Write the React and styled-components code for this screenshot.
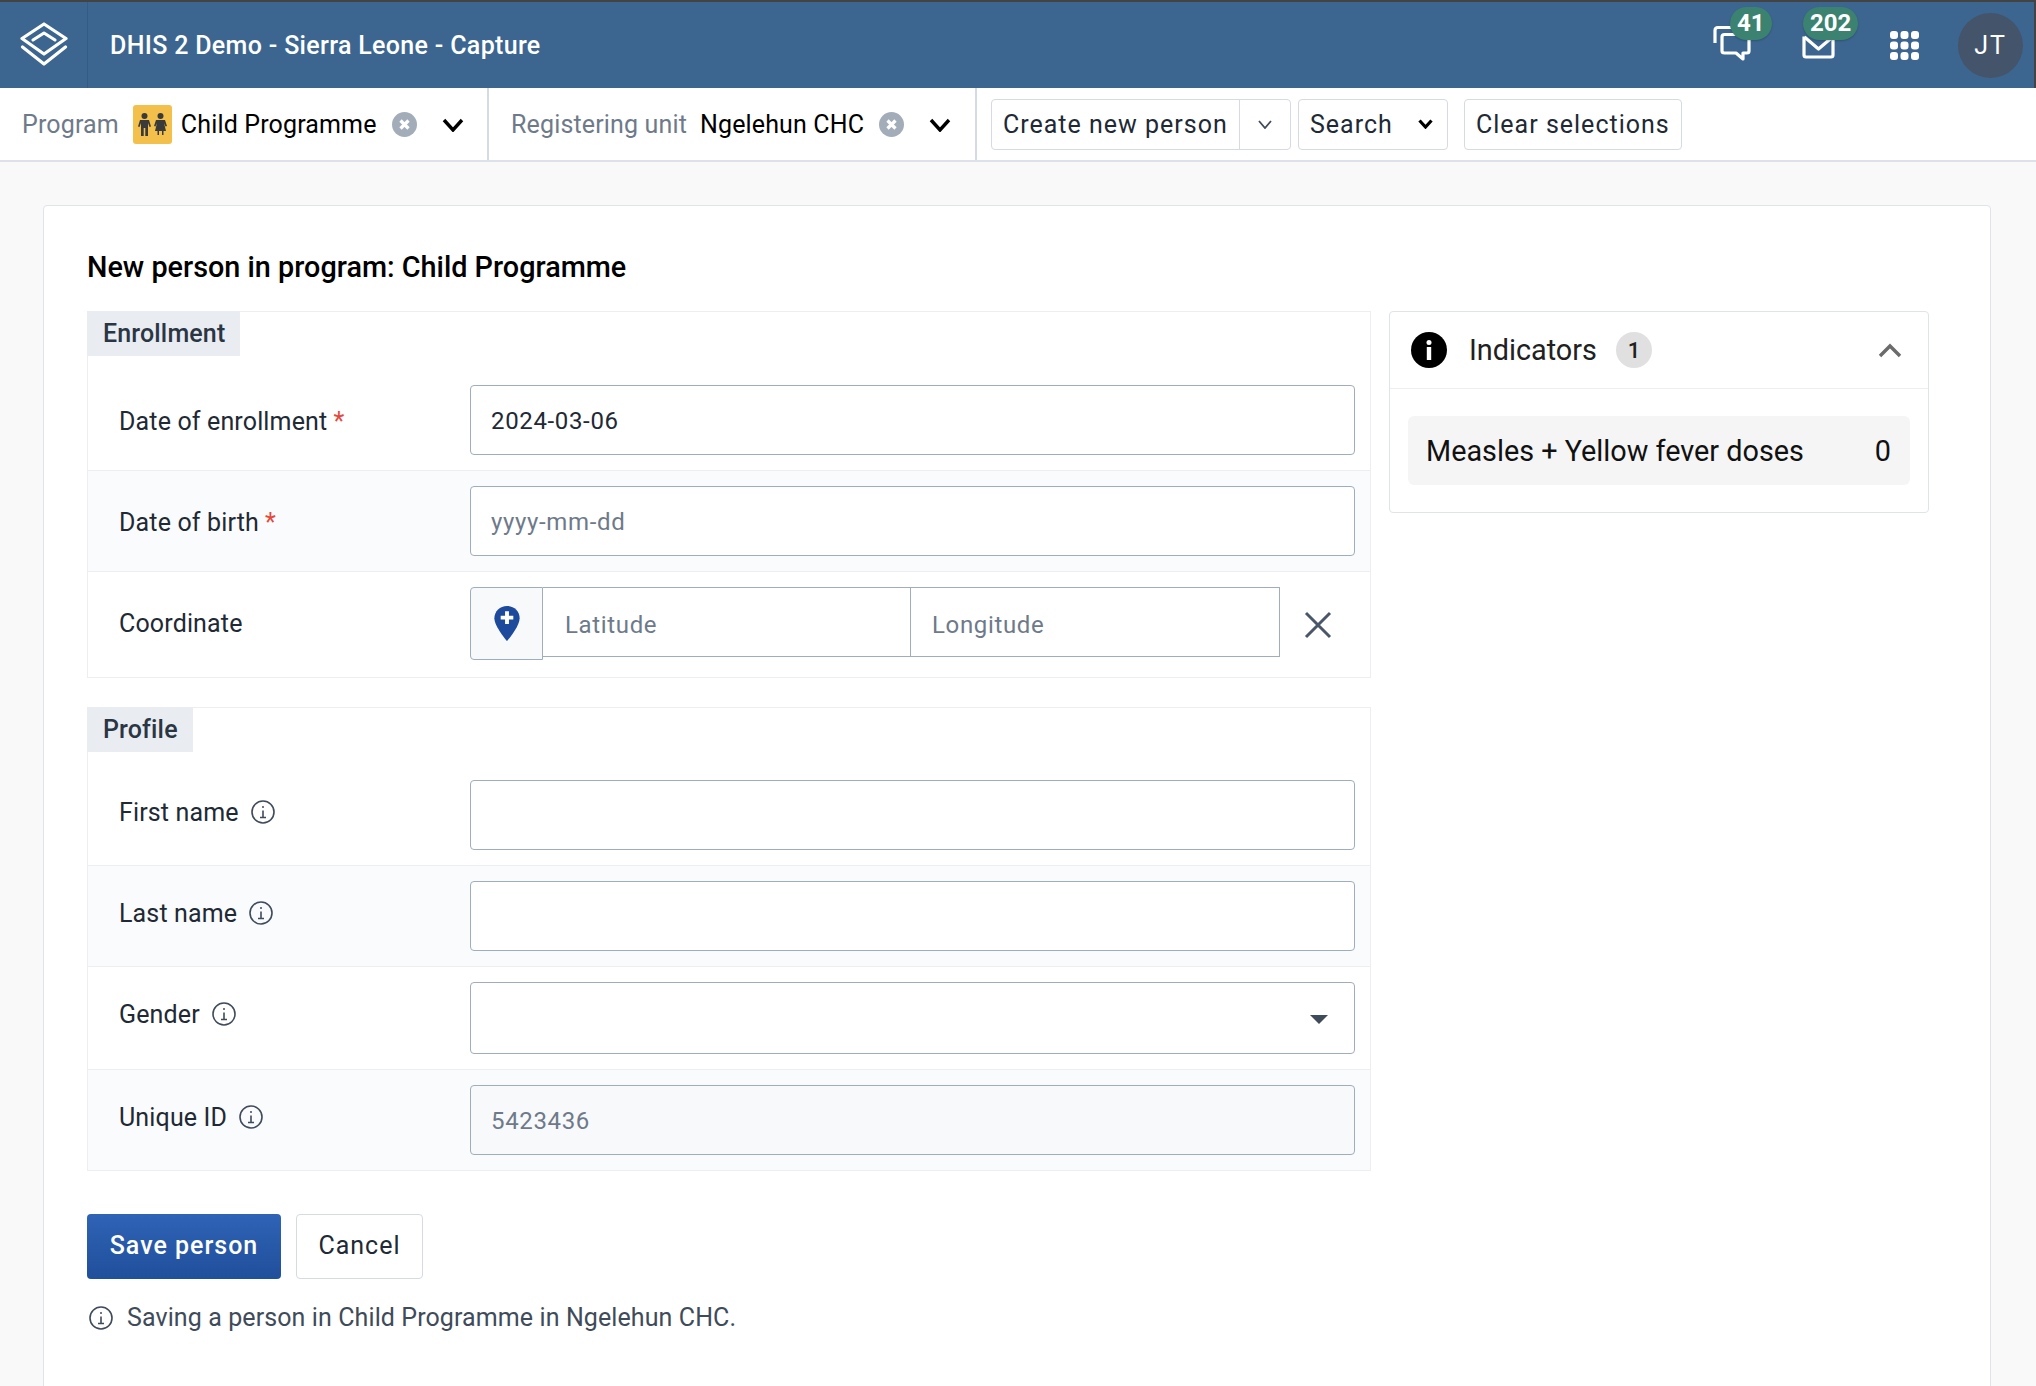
import React from 'react'
import styled, { createGlobalStyle } from 'styled-components'

const Global = createGlobalStyle`
  html, body { margin: 0; padding: 0; background: #f9f9fa; }
  body { font-family: Roboto, "Noto Sans", sans-serif; color: #212934; }
  * { box-sizing: border-box; }
`

const Screen = styled.div`
  width: 2036px;
  height: 1386px;
  overflow: hidden;
  background: #f9f9fa;
`

const Header = styled.header`
  height: 88px;
  display: flex;
  align-items: stretch;
  background: #3c668f;
  border-top: 2px solid #434343;
  border-right: 2px solid #434343;
  color: #fff;
`
const LogoCell = styled.div`
  width: 88px;
  display: flex;
  align-items: center;
  justify-content: center;
  border-right: 1px solid #345b82;
  padding-bottom: 2px;
`
const AppTitle = styled.div`
  margin-left: 22px;
  align-self: center;
  font-size: 25px;
  font-weight: 500;
  letter-spacing: 0.33px;
`
const HeaderRight = styled.div`
  margin-left: auto;
  display: flex;
  align-items: center;
  padding-right: 11px;
`
const NotifCell = styled.div`
  position: relative;
  width: ${p => p.$width}px;
  height: 40px;
  display: flex;
  align-items: flex-start;
`
const IconOffset = styled.span`
  display: block;
  margin-top: ${p => p.$top}px;
`
const Badge = styled.span`
  position: absolute;
  top: ${p => p.$top}px;
  left: ${p => p.$left}px;
  height: 33px;
  padding: 0 7px;
  min-width: 41px;
  border-radius: 17px;
  background: #3b8271;
  box-shadow: 0 1px 2px rgba(0, 0, 0, 0.2);
  color: #fff;
  font-size: 24px;
  font-weight: 700;
  line-height: 33px;
  text-align: center;
`
const Avatar = styled.div`
  width: 65px;
  height: 65px;
  border-radius: 50%;
  background: #44546b;
  color: #fff;
  font-size: 25px;
  letter-spacing: 2px;
  display: flex;
  align-items: center;
  justify-content: center;
`

const Toolbar = styled.div`
  height: 74px;
  display: flex;
  background: #fff;
  border-bottom: 2px solid #dde1ea;
`
const Selector = styled.div`
  width: ${p => p.$width}px;
  display: flex;
  align-items: center;
  padding-left: ${p => p.$pad}px;
  border-right: 2px solid #d5dae3;
  font-size: 25px;
  letter-spacing: 0.15px;
`
const SelectorLabel = styled.span`
  color: #6e7a8a;
  margin-right: ${p => p.$gap}px;
`
const SelectorValue = styled.span`
  color: #000;
  margin-left: ${p => p.$left || 0}px;
`
const ProgramIcon = styled.span`
  width: 39px;
  height: 39px;
  border-radius: 3px;
  background: #f3c14b;
  display: flex;
  align-items: center;
  justify-content: center;
`
const ClearDot = styled.svg`
  width: 25px;
  height: 25px;
  margin-left: 15px;
`
const SelectorArrow = styled.svg`
  width: 22px;
  height: 14px;
  margin-left: 25px;
  margin-top: 2px;
`
const ToolbarActions = styled.div`
  display: flex;
  align-items: center;
  padding-left: 14px;
`
const ToolButton = styled.div`
  height: 51px;
  display: flex;
  align-items: center;
  background: #fff;
  border: 1px solid #d5dae3;
  border-radius: 4px;
  color: #212934;
  font-size: 25px;
  letter-spacing: 1px;
  margin-left: ${p => p.$left || 0}px;
  padding: ${p => p.$padding || '0 11px'};
  width: ${p => (p.$width ? p.$width + 'px' : 'auto')};
`
const SplitPart = styled.span`
  width: 51px;
  margin-left: auto;
  align-self: stretch;
  display: flex;
  align-items: center;
  justify-content: center;
  border-left: 1px solid #d5dae3;
`

const Page = styled.main`
  padding: 43px 45px 0 43px;
`
const Card = styled.div`
  height: 1300px;
  background: #fff;
  border: 1px solid #dfe3ea;
  border-radius: 4px;
  padding: 44px 60px 0 43px;
`
const Heading = styled.h1`
  margin: 0;
  height: 61px;
  font-size: 28.8px;
  line-height: 34px;
  font-weight: 500;
  color: #000;
`
const Columns = styled.div`
  display: flex;
  align-items: flex-start;
  gap: 18px;
`
const FormColumn = styled.div`
  width: 1284px;
`

const Section = styled.section`
  border: 1px solid #eceef2;
  margin-bottom: ${p => p.$bottom || 0}px;
`
const SectionTab = styled.div`
  display: table;
  height: 45px;
  margin: -1px 0 0 -1px;
  padding: 0 15px 0 16px;
  background: #e9ecf1;
  color: #2b3644;
  font-size: 25px;
  font-weight: 500;
  letter-spacing: 0.15px;
  line-height: 45px;
`
const Row = styled.div`
  display: flex;
  padding: 15px 15px 15px 31px;
  padding-top: ${p => p.$top || 15}px;
  background: ${p => (p.$alt ? '#fafbfc' : '#fff')};
  border-top: ${p => (p.$top ? 'none' : '1px solid #eceef2')};
`
const LabelCell = styled.div`
  width: 351px;
  height: 70px;
  flex: none;
  display: flex;
  align-items: center;
  gap: 12px;
  color: #212934;
  font-size: 25px;
  letter-spacing: 0.15px;
  padding: ${p => (p.$info ? '0 0 6px' : '3px 0 0')};
`
const Required = styled.span`
  color: #e5483b;
  margin-left: -6px;
`
const TextInput = styled.input`
  flex: 1;
  width: 100%;
  min-width: 0;
  height: 70px;
  padding: 1px 20px 0;
  border: 1px solid #a0adba;
  border-radius: 4px;
  background: ${p => (p.disabled ? '#f8f9fa' : '#fff')};
  color: #212934;
  font-family: Roboto, sans-serif;
  font-size: 24px;
  letter-spacing: 0.65px;
  &::placeholder { color: #6e7a8a; opacity: 1; }
  &:disabled { color: #6e7a8a; }
`
const SelectBox = styled.div`
  flex: 1;
  height: 72px;
  padding-right: 26px;
  display: flex;
  align-items: center;
  justify-content: flex-end;
  border: 1px solid #a0adba;
  border-radius: 4px;
  background: #fff;
`
const Caret = styled.span`
  width: 0;
  height: 0;
  margin-top: 3px;
  border-left: 9px solid transparent;
  border-right: 9px solid transparent;
  border-top: 9px solid #404b5a;
`
const CoordGroup = styled.div`
  flex: 1;
  display: flex;
  align-items: flex-start;
  height: 75px;
`
const PinButton = styled.div`
  width: 73px;
  height: 73px;
  flex: none;
  display: flex;
  align-items: center;
  justify-content: center;
  background: #f8f9fb;
  border: 1px solid #a0adba;
  border-radius: 4px 0 0 4px;
`
const CoordInput = styled.input`
  width: ${p => (p.$joined ? 370 : 368)}px;
  height: 70px;
  padding: 6px 20px 0 ${p => (p.$joined ? 21 : 22)}px;
  border: 1px solid #a0adba;
  border-left: ${p => (p.$joined ? '1px solid #a0adba' : 'none')};
  margin-left: ${p => (p.$joined ? -1 : 0)}px;
  background: #fff;
  font-family: Roboto, sans-serif;
  font-size: 24px;
  letter-spacing: 0.65px;
  &::placeholder { color: #6e7a8a; opacity: 1; }
`
const CoordClear = styled.svg`
  width: 28px;
  height: 28px;
  margin: 24px 0 0 24px;
`

const Actions = styled.div`
  display: flex;
  gap: 15px;
  margin-top: 43px;
`
const PrimaryButton = styled.div`
  width: 194px;
  height: 65px;
  display: flex;
  align-items: center;
  justify-content: center;
  border-radius: 4px;
  background: linear-gradient(#2f63b6, #204f9b);
  color: #fff;
  font-size: 25px;
  font-weight: 500;
  letter-spacing: 1px;
  padding-bottom: 2px;
`
const SecondaryButton = styled.div`
  width: 127px;
  height: 65px;
  display: flex;
  align-items: center;
  justify-content: center;
  border: 1px solid #d5dae3;
  border-radius: 4px;
  background: #fff;
  color: #212934;
  font-size: 25px;
  letter-spacing: 1px;
  padding-bottom: 2px;
`
const SaveNote = styled.div`
  display: flex;
  align-items: center;
  gap: 14px;
  margin: 24px 0 0 2px;
  color: #404b5a;
  font-size: 25px;
  letter-spacing: 0.1px;
`

const Panel = styled.aside`
  width: 540px;
  height: 202px;
  border: 1px solid #dfe3ea;
  border-radius: 4px;
`
const PanelHead = styled.div`
  height: 77px;
  display: flex;
  align-items: center;
  padding: 0 26px 0 21px;
  border-bottom: 1px solid #eceef2;
`
const PanelTitle = styled.span`
  margin-left: 22px;
  font-size: 28.8px;
  color: #212121;
`
const CountChip = styled.span`
  width: 36px;
  height: 36px;
  margin-left: 19px;
  border-radius: 50%;
  background: #e0e0e0;
  color: #212121;
  font-size: 22px;
  font-weight: 500;
  display: flex;
  align-items: center;
  justify-content: center;
`
const PanelToggle = styled.svg`
  width: 24px;
  height: 15px;
  margin-left: auto;
`
const PanelBody = styled.div`
  padding: 27px 18px;
`
const Measure = styled.div`
  height: 69px;
  display: flex;
  align-items: center;
  justify-content: space-between;
  padding: 0 19px 0 18px;
  border-radius: 6px;
  background: #f5f5f5;
  font-size: 28.8px;
  color: #111;
`

const InfoIcon = ({ size = 24 }) => (
  <svg width={size} height={size} viewBox="0 0 24 24" fill="none" stroke="#404b5a" strokeWidth="1.6">
    <circle cx="12" cy="12" r="11" />
    <path d="M12 10.5V17.5M9 17.5H15" />
    <circle cx="12" cy="7" r="1" fill="#404b5a" stroke="none" />
  </svg>
)

const Chevron = () => (
  <SelectorArrow viewBox="0 0 22 14" fill="none" stroke="#000" strokeWidth="3.4">
    <path d="M2 2L11 12L20 2" />
  </SelectorArrow>
)

const ClearIcon = () => (
  <ClearDot viewBox="0 0 25 25">
    <circle cx="12.5" cy="12.5" r="12.5" fill="#a3adba" />
    <path d="M8.5 8.5L16.5 16.5M16.5 8.5L8.5 16.5" stroke="#fff" strokeWidth="3.2" />
  </ClearDot>
)

const Logo = () => (
  <svg width="48" height="44" viewBox="0 0 48 44" fill="none" stroke="#fff" strokeWidth="3.2" strokeLinejoin="round" strokeLinecap="round">
    <path d="M24 2L46 16.5L24 32L2 16.5Z" />
    <path d="M13 18L24 11L35 18" />
    <path d="M2.5 25L24 42L45.5 25" />
  </svg>
)

const CommentIcon = () => (
  <svg width="38" height="36" viewBox="0 0 38 36" fill="none" stroke="#fff" strokeWidth="3.2" strokeLinejoin="round">
    <path d="M2 18V5.5Q2 2.5 5 2.5H26" />
    <path d="M9 12Q9 9.5 11.5 9.5H34Q36 9.5 36 12V26Q36 28 34 28H30V34L23 28H11.5Q9 28 9 26Z" />
  </svg>
)

const MailIcon = () => (
  <svg width="33" height="26" viewBox="0 0 33 26" fill="none" stroke="#fff" strokeWidth="3.2" strokeLinejoin="round">
    <path d="M2 3.5V22Q2 24 4 24H29Q31 24 31 22V3.5" />
    <path d="M2.5 4L16.5 16L30.5 4" />
  </svg>
)

const AppsIcon = () => (
  <svg width="29" height="29" viewBox="0 0 29 29" fill="#fff">
    {[4, 14.5, 25].map(y => [4, 14.5, 25].map(x => (
      <rect key={x + '-' + y} x={x - 4} y={y - 4} width="8" height="8" rx="3" />
    )))}
  </svg>
)

const PeopleIcon = () => (
  <svg width="29" height="23" viewBox="0 0 29 23" fill="#3a3a3a">
    <circle cx="6.5" cy="3" r="3" />
    <path d="M2 7H11L13 13.5L11.5 14L10 10V23H7.3V15H5.7V23H3V10L1.5 14L0 13.5Z" />
    <circle cx="22.5" cy="3" r="3" />
    <path d="M18 7H27L29 13L27.5 13.5L26 10L28 18H17L19 10L17.5 13.5L16 13Z" />
    <path d="M19.5 18H21V22H19.5ZM24 18H25.5V22H24Z" />
  </svg>
)

const PinIcon = () => (
  <svg width="26" height="35" viewBox="0 0 26 36">
    <path d="M13 0C5.8 0 0 5.5 0 12.5C0 21 13 36 13 36C13 36 26 21 26 12.5C26 5.5 20.2 0 13 0Z" fill="#1d4a9b" />
    <path d="M13 5.5V18.5M6.5 12H19.5" stroke="#fff" strokeWidth="4" />
  </svg>
)

const FilledInfo = () => (
  <svg width="36" height="36" viewBox="0 0 36 36">
    <circle cx="18" cy="18" r="18" fill="#000" />
    <circle cx="18" cy="10.5" r="2.5" fill="#fff" />
    <rect x="15.8" y="15" width="4.4" height="13" fill="#fff" />
  </svg>
)

const FieldRow = ({ label, required, info, alt, top, children }) => (
  <Row $alt={alt} $top={top}>
    <LabelCell $info={info}>
      <span>{label}</span>
      {required && <Required>*</Required>}
      {info && <InfoIcon />}
    </LabelCell>
    {children}
  </Row>
)

const App = () => {
  return (
    <Screen>
      <Global />
      <Header>
        <LogoCell><Logo /></LogoCell>
        <AppTitle>DHIS 2 Demo - Sierra Leone - Capture</AppTitle>
        <HeaderRight>
          <NotifCell $width={89}>
            <CommentIcon />
            <Badge $top={-18} $left={17}>41</Badge>
          </NotifCell>
          <NotifCell $width={88}>
            <IconOffset $top={8}><MailIcon /></IconOffset>
            <Badge $top={-18} $left={1}>202</Badge>
          </NotifCell>
          <NotifCell $width={68}>
            <IconOffset $top={6}><AppsIcon /></IconOffset>
          </NotifCell>
          <Avatar>JT</Avatar>
        </HeaderRight>
      </Header>

      <Toolbar>
        <Selector $width={489} $pad={22}>
          <SelectorLabel $gap={14}>Program</SelectorLabel>
          <ProgramIcon><PeopleIcon /></ProgramIcon>
          <SelectorValue $left={9}>Child Programme</SelectorValue>
          <ClearIcon />
          <Chevron />
        </Selector>
        <Selector $width={488} $pad={22}>
          <SelectorLabel $gap={13}>Registering unit</SelectorLabel>
          <SelectorValue>Ngelehun CHC</SelectorValue>
          <ClearIcon />
          <Chevron />
        </Selector>
        <ToolbarActions>
          <ToolButton $padding="0 0 0 11px" $width={300}>
            Create new person
            <SplitPart>
              <svg width="14" height="9" viewBox="0 0 14 9" fill="none" stroke="#404b5a" strokeWidth="1.8"><path d="M1 1L7 8L13 1" /></svg>
            </SplitPart>
          </ToolButton>
          <ToolButton $left={7} $width={150}>
            Search
            <svg style={{ marginLeft: 'auto', marginRight: 3 }} width="15" height="10" viewBox="0 0 15 10" fill="none" stroke="#000" strokeWidth="3.2"><path d="M1.5 1.5L7.5 8L13.5 1.5" /></svg>
          </ToolButton>
          <ToolButton $left={16}>Clear selections</ToolButton>
        </ToolbarActions>
      </Toolbar>

      <Page>
        <Card>
          <Heading>New person in program: Child Programme</Heading>
          <Columns>
            <FormColumn>
              <Section $bottom={29}>
                <SectionTab>Enrollment</SectionTab>
                <FieldRow label="Date of enrollment" required top={29}>
                  <TextInput defaultValue="2024-03-06" />
                </FieldRow>
                <FieldRow label="Date of birth" required alt>
                  <TextInput placeholder="yyyy-mm-dd" />
                </FieldRow>
                <FieldRow label="Coordinate">
                  <CoordGroup>
                    <PinButton><PinIcon /></PinButton>
                    <CoordInput placeholder="Latitude" />
                    <CoordInput placeholder="Longitude" $joined />
                    <CoordClear viewBox="0 0 28 28" fill="none" stroke="#4a5768" strokeWidth="3">
                      <path d="M2 2L26 26M26 2L2 26" />
                    </CoordClear>
                  </CoordGroup>
                </FieldRow>
              </Section>

              <Section>
                <SectionTab>Profile</SectionTab>
                <FieldRow label="First name" info top={28}>
                  <TextInput />
                </FieldRow>
                <FieldRow label="Last name" info alt>
                  <TextInput />
                </FieldRow>
                <FieldRow label="Gender" info>
                  <SelectBox><Caret /></SelectBox>
                </FieldRow>
                <FieldRow label="Unique ID" info alt>
                  <TextInput disabled defaultValue="5423436" />
                </FieldRow>
              </Section>

              <Actions>
                <PrimaryButton>Save person</PrimaryButton>
                <SecondaryButton>Cancel</SecondaryButton>
              </Actions>
              <SaveNote>
                <InfoIcon />
                Saving a person in Child Programme in Ngelehun CHC.
              </SaveNote>
            </FormColumn>

            <Panel>
              <PanelHead>
                <FilledInfo />
                <PanelTitle>Indicators</PanelTitle>
                <CountChip>1</CountChip>
                <PanelToggle viewBox="0 0 24 15" fill="none" stroke="#6b6b6b" strokeWidth="3.4">
                  <path d="M2 13L12 3L22 13" />
                </PanelToggle>
              </PanelHead>
              <PanelBody>
                <Measure>
                  <span>Measles + Yellow fever doses</span>
                  <span>0</span>
                </Measure>
              </PanelBody>
            </Panel>
          </Columns>
        </Card>
      </Page>
    </Screen>
  )
}

export default App
